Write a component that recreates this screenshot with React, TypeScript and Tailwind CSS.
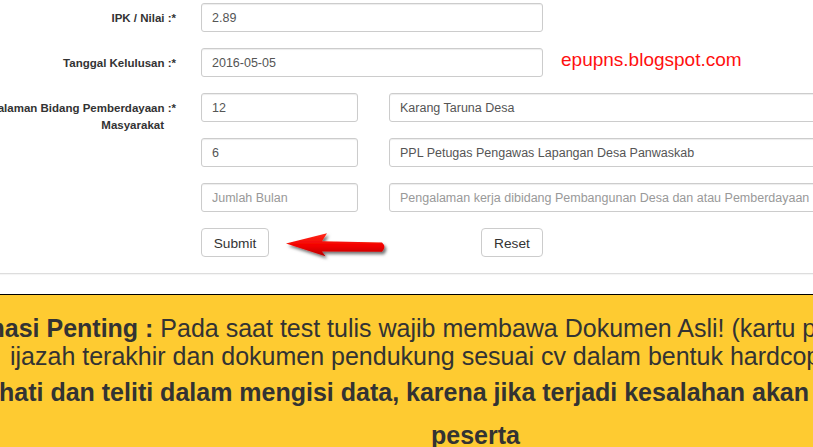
import React from 'react';

const inputCls =
  'h-[29px] rounded-[3px] border border-[#cccccc] bg-white px-[10px] text-[12.5px] text-[#555555] shadow-[inset_0_1px_1px_rgba(0,0,0,0.075)] outline-none placeholder:text-[#999999]';

const btnCls =
  'h-[29px] rounded-[4px] border border-[#cccccc] bg-white pt-[3px] text-[13.7px] text-[#333333]';

const Label: React.FC<{ children: React.ReactNode }> = ({ children }) => (
  <div className="w-[176px] shrink-0 pt-[7px] text-right text-[11.5px] font-bold leading-[17px] text-[#333333]">
    {children}
  </div>
);

const Arrow = () => (
  <svg
    className="absolute left-[284px] top-[230px]"
    width="108"
    height="34"
    viewBox="0 0 108 34"
  >
    <defs>
      <linearGradient id="red" x1="0" y1="0" x2="0" y2="1">
        <stop offset="0" stopColor="#ff2a1a" />
        <stop offset="0.55" stopColor="#f20000" />
        <stop offset="1" stopColor="#b80000" />
      </linearGradient>
      <filter id="shadow" x="-10%" y="-30%" width="130%" height="180%">
        <feDropShadow dx="2" dy="2.5" stdDeviation="1.6" floodColor="#000" floodOpacity="0.55" />
      </filter>
    </defs>
    <path
      d="M2 13.5 L43 3.2 L38 11.2 L98 12.6 Q102.8 17 98 21.8 L38 21.6 L41.5 26.3 Z"
      fill="url(#red)"
      filter="url(#shadow)"
    />
  </svg>
);

const App: React.FC = () => {
  return (
    <div className="relative h-[447px] w-[813px] overflow-hidden bg-white font-['Liberation_Sans',Arial,sans-serif]">
      <div className="border-b border-[#dddddd] pt-[3px] pb-[16px] shadow-[0_1px_1px_rgba(0,0,0,0.04)]">
        <div className="flex gap-[25px]">
          <Label>IPK / Nilai :*</Label>
          <input className={`${inputCls} w-[342px]`} defaultValue="2.89" />
        </div>

        <div className="mt-[16px] flex gap-[25px]">
          <Label>Tanggal Kelulusan :*</Label>
          <input className={`${inputCls} w-[342px]`} defaultValue="2016-05-05" />
          <span className="ml-[-7px] mt-[1px] whitespace-nowrap text-[19px] leading-[22px] text-[#ff1010]">
            epupns.blogspot.com
          </span>
        </div>

        <div className="mt-[16px] flex gap-[25px]">
          <div className="w-[176px] shrink-0 pt-[7px] text-right text-[11.5px] font-bold leading-[17px] text-[#333333]">
            <div className="flex justify-end whitespace-nowrap">
              <span className="shrink-0">Pengalaman Bidang Pemberdayaan :*</span>
            </div>
            <div className="mr-[12px]">Masyarakat</div>
          </div>
          <div className="flex flex-col gap-[16px]">
            <div className="flex gap-[31px]">
              <input className={`${inputCls} w-[157px]`} defaultValue="12" />
              <input className={`${inputCls} w-[520px] shrink-0`} defaultValue="Karang Taruna Desa" />
            </div>
            <div className="flex gap-[31px]">
              <input className={`${inputCls} w-[157px]`} defaultValue="6" />
              <input
                className={`${inputCls} w-[520px] shrink-0`}
                defaultValue="PPL Petugas Pengawas Lapangan Desa Panwaskab"
              />
            </div>
            <div className="flex gap-[31px]">
              <input className={`${inputCls} w-[157px]`} placeholder="Jumlah Bulan" />
              <input
                className={`${inputCls} w-[520px] shrink-0`}
                placeholder="Pengalaman kerja dibidang Pembangunan Desa dan atau Pemberdayaan Masyarakat"
              />
            </div>
            <div className="flex w-[342px] justify-between">
              <button className={`${btnCls} w-[68px]`}>Submit</button>
              <button className={`${btnCls} w-[62px]`}>Reset</button>
            </div>
          </div>
        </div>
      </div>

      <div className="mt-[20px] border-t border-black bg-[#fecb31] pt-[19px] pb-[20px] text-[25px] text-[#333333]">
        <div className="ml-[-73px] whitespace-nowrap leading-[28px]">
          <b>Informasi Penting :</b> Pada saat test tulis wajib membawa Dokumen Asli! (kartu peserta, KTP,
        </div>
        <div className="ml-[10px] whitespace-nowrap leading-[28px]">
          ijazah terakhir dan dokumen pendukung sesuai cv dalam bentuk hardcopy)
        </div>
        <div className="mt-[8px] ml-[-1px] whitespace-nowrap font-bold leading-[28px]">
          hati dan teliti dalam mengisi data, karena jika terjadi kesalahan akan berakibat pada kelulusan
        </div>
        <div className="mt-[15px] ml-[431px] whitespace-nowrap font-bold leading-[28px]">peserta</div>
      </div>

      <Arrow />
    </div>
  );
};

export default App;
